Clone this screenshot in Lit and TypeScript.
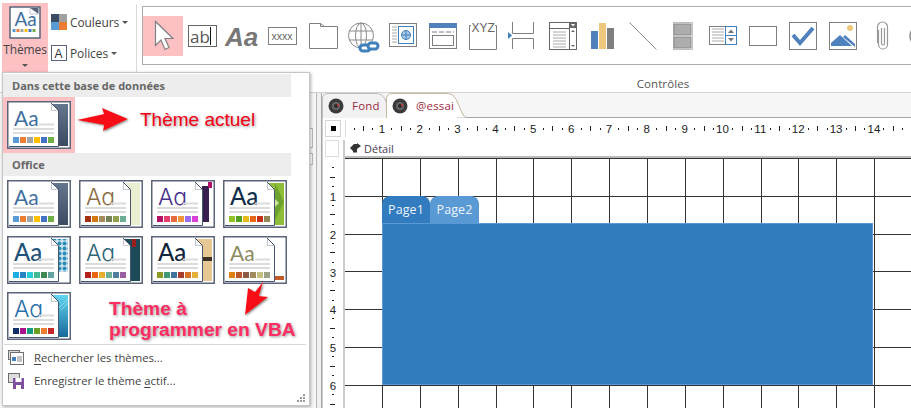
import { LitElement, html, css, svg } from "lit";
import { customElement } from "lit/decorators.js";

interface Theme { aa: string; w: number; size: number; single: boolean; sw: string[]; deco: unknown; }

const page = svg`
  <path d="M2 2H44L51 9V45H2Z" fill="#fff"/>
  <path d="M44 2L51.500 9.500V45.500H2" fill="none" stroke="#47566e"/>
  <path d="M44.500 3V9.500H51" fill="none" stroke="#c3c8d0"/>`;

const themes: Theme[] = [
  { aa: "#3f6f9f", w: 400, size: 21, single: false, sw: ["#5b9bd5", "#ed7d31", "#a5a5a5", "#ffc000", "#4472c4", "#70ad47"],
    deco: svg`<rect x="44" y="3" width="17" height="42" fill="url(#g1)"/>` },
  { aa: "#8a6c45", w: 300, size: 23, single: true, sw: ["#a5300f", "#d5770f", "#a58a5c", "#758258", "#8fa34c", "#6fae95"],
    deco: svg`<rect x="44" y="3" width="17" height="42" fill="#e9efd3"/>` },
  { aa: "#47308a", w: 300, size: 23, single: true, sw: ["#b31166", "#e33d6f", "#e46c3c", "#f09537", "#9a6cf0", "#d83ed8"],
    deco: svg`<rect x="51" y="6" width="7" height="36" fill="#37204f"/><rect x="57" y="2" width="4" height="6" fill="#b0106a"/>` },
  { aa: "#12304c", w: 500, size: 24, single: false, sw: ["#90c226", "#54a021", "#e6b91e", "#e76618", "#c42f1a", "#918655"],
    deco: svg`<rect x="44" y="3" width="17" height="42" fill="#8ebd3a"/><path d="M52 3L61 22L52 40Z" fill="#6ca32d"/><path d="M51 18L56 23L51 28Z" fill="#cfe3a3"/>` },
  { aa: "#1f5378", w: 500, size: 24, single: false, sw: ["#1cade4", "#2683c6", "#27ced7", "#42ba97", "#3e8853", "#62a39f"],
    deco: svg`<rect x="44" y="3" width="17" height="33" fill="url(#dots)"/>` },
  { aa: "#2f6678", w: 300, size: 23, single: true, sw: ["#b71e1e", "#e8640e", "#e6b02c", "#6fb094", "#4f7f9b", "#9b5fa0"],
    deco: svg`<rect x="44" y="3" width="17" height="42" fill="#1c4a58"/><rect x="53" y="3" width="4" height="8" fill="#9c1c1c"/>` },
  { aa: "#10263c", w: 500, size: 24, single: false, sw: ["#8c9a23", "#3f9a78", "#3f73a0", "#a63d30", "#d67628", "#e4b03a"],
    deco: svg`<rect x="44" y="3" width="17" height="42" fill="#e7c793"/><rect x="51" y="21" width="10" height="4" fill="#3b3124"/>` },
  { aa: "#8e8a60", w: 400, size: 21, single: false, sw: ["#e0800f", "#b9562a", "#8f5a45", "#a08a5c", "#c5bf82", "#9aa388"],
    deco: svg`<rect x="51" y="40" width="10" height="4" fill="#c35a2a"/><rect x="51" y="37" width="10" height="1" fill="#f3f3f3"/>` },
  { aa: "#2a6fa8", w: 300, size: 23, single: true, sw: ["#0f2f66", "#a8128c", "#149a7e", "#6da022", "#ed7d31", "#c42727"],
    deco: svg`<rect x="44" y="3" width="17" height="42" fill="url(#g9)"/><path d="M50 18L61 7M54 18L61 11" stroke="#a6e6f5" stroke-width=".7"/>` },
];

function thumb(t: Theme) {
  return svg`<svg class="thumb" width="64" height="48" viewBox="0 0 64 48">
    <defs>
      <linearGradient id="g1" x1="0" y1="0" x2="0" y2="1"><stop offset="0" stop-color="#66768e"/><stop offset="1" stop-color="#3a4a63"/></linearGradient>
      <linearGradient id="g9" x1="0" y1="0" x2="0" y2="1"><stop offset="0" stop-color="#62d6f0"/><stop offset="1" stop-color="#17699c"/></linearGradient>
      <pattern id="dots" width="5" height="5" patternUnits="userSpaceOnUse"><rect width="5" height="5" fill="#cbe4ef"/><circle cx="2.500" cy="2.500" r="2" fill="#2b8cb8"/></pattern>
    </defs>
    <rect x=".75" y=".75" width="62.500" height="46.500" fill="#fff" stroke="#5b6579" stroke-width="1.500"/>
    ${t.deco}
    ${page}
    <text class=${t.single ? "aa single" : "aa"} x="7" y="25" font-size=${t.size} font-weight=${t.w} fill=${t.aa}>Aa</text>
    <rect x="32" y="22.500" width="15" height="2" fill="#dcdcdc"/>
    <rect x="6" y="27" width="41" height="2" fill="#dcdcdc"/>
    <rect x="6" y="31" width="41" height="2" fill="#dcdcdc"/>
    ${t.sw.map((c, k) => svg`<rect x=${6 + k * 7} y="36" width="6" height="6" fill=${c}/>`)}
  </svg>`;
}

const P = "#7f7f7f";
const galleryIcons = [
  svg`<path d="M12.500 5.500V29.500L18 24L22 33.500L26 31.500L22 22.500H30Z" fill="#fff" stroke="#808080" stroke-width="1.200"/>`,
  svg`<rect x="5.500" y="9.500" width="28" height="21" fill="#fff" stroke="#666"/><text x="7" y="26.500" font-size="17" font-weight="500" fill="#555" class="os">ab</text><path d="M27.500 11V29" stroke="#111"/>`,
  svg`<text x="2" y="29.500" font-size="26" font-weight="700" font-style="italic" fill="#777" class="sans">Aa</text>`,
  svg`<rect x="5.500" y="11.500" width="28" height="17" fill="#fff" stroke=${P}/><text x="8.500" y="24" font-size="10.500" fill="#666" class="sans">xxxx</text>`,
  svg`<path d="M6.500 32.500V7.500H17.500L21.500 10.500H34.500V32.500Z M17.500 7.500V10.500H21.500" fill="#fff" stroke=${P}/>`,
  svg`<g fill="none" stroke="#8a8a8a"><circle cx="18" cy="19.500" r="12.500"/><ellipse cx="18" cy="19.500" rx="5.500" ry="12.500"/><path d="M18 7V32M6 15H30M6 24H30"/></g><g fill="none" stroke="#3f80bd" stroke-width="3"><rect x="17" y="29" width="10" height="6" rx="3" fill="#fff"/><rect x="25" y="27" width="10" height="6" rx="3" fill="#fff"/></g>`,
  svg`<rect x="6.500" y="7.500" width="27" height="23" fill="#fff" stroke=${P}/><path d="M9 11H14M9 14H14M9 17H14M9 20H14M9 23H14M9 26H14" stroke="#aaa"/><rect x="15.500" y="10.500" width="15" height="17" fill="none" stroke="#3f80bd"/><circle cx="23" cy="19" r="4.500" fill="#a9c8e6" stroke="#3f80bd"/><path d="M23 14.500V23.500M18.500 19H27.500" stroke="#3f80bd"/>`,
  svg`<rect x="6.500" y="7.500" width="27" height="25" fill="#fff" stroke=${P}/><rect x="6" y="7" width="28" height="5" fill="#4f81bd"/><path d="M9 16H31" stroke=${P} stroke-dasharray="5 2"/><rect x="9.500" y="19.500" width="21" height="10" fill="none" stroke=${P}/>`,
  svg`<path d="M8 9.500H6.500V33.500H33.500V9.500H32" fill="none" stroke=${P}/><text x="8.500" y="16" font-size="12" fill="#666" class="sans">XYZ</text>`,
  svg`<path d="M9.500 6V17.500H30.500V6M9.500 33V22.500H30.500V33" fill="none" stroke=${P}/><path d="M5 16L9 19.500L5 23Z" fill="#3f80bd"/>`,
  svg`<rect x="6.500" y="6.500" width="27" height="27" fill="#fff" stroke="#666"/><path d="M6.500 12.500H26.500M26.500 6.500V33.500" stroke="#666"/><rect x="26" y="6" width="8" height="6" fill="#666"/><path d="M28 8H32L30 10.500Z" fill="#fff"/><path d="M10 16H23M10 19H23M10 22H23M10 25H23M10 28H23M10 31H23" stroke="#aaa"/><path d="M28 16H32L30 14ZM28 29H32L30 31Z" fill="#666"/>`,
  svg`<rect x="8" y="15" width="7" height="18" fill="#4f81bd"/><rect x="16" y="7" width="7" height="26" fill="#edc77c"/><rect x="24" y="12" width="7" height="21" fill="#7f7f7f"/>`,
  svg`<path d="M6.500 6.500L33.500 33.500" stroke="#808080" stroke-width=".9"/>`,
  svg`<rect x="10.500" y="6.500" width="19" height="27" fill="#fff" stroke="#c0c0c0"/><rect x="11" y="8" width="17" height="11" fill="#adadad" stroke="#888"/><rect x="11" y="21" width="17" height="11" fill="#adadad" stroke="#888"/>`,
  svg`<rect x="6.500" y="10.500" width="27" height="18" fill="#fff" stroke=${P}/><path d="M9 13H21M9 16H21M9 19H21M9 22H21M9 25H21" stroke="#aaa"/><rect x="22.500" y="10.500" width="11" height="18" fill="#fff" stroke="#3f80bd"/><path d="M22.500 19.500H33.500" stroke="#3f80bd"/><path d="M25 17L28 13.500L31 17ZM25 22H31L28 25.500Z" fill="#777"/>`,
  svg`<rect x="6.500" y="10.500" width="27" height="19" fill="#fff" stroke=${P}/>`,
  svg`<rect x="6.500" y="6.500" width="27" height="27" fill="#fff" stroke=${P}/><path d="M10 19L17 27L30 12" fill="none" stroke="#4f81bd" stroke-width="4"/>`,
  svg`<rect x="6.500" y="6.500" width="27" height="27" fill="#fff" stroke=${P}/><circle cx="27" cy="12" r="3" fill="#edc77c"/><path d="M8 30V27L17 19L29 30Z" fill="#4f81bd"/><path d="M22 19L32 28V31L20 21Z" fill="#4f81bd"/>`,
  svg`<path d="M15.500 14V28.500A4.500 4.500 0 0 0 24.500 28.500V11A5 5 0 0 0 14.500 11V27M18.500 12V27.500A1.500 1.500 0 0 0 21.500 27.500V12" fill="none" stroke="#999" stroke-width="1.200"/>`,
  svg`<circle cx="17" cy="20" r="10" fill="none" stroke="#8a8a8a" stroke-width="1.500"/>`,
];

const gridX = Array.from({ length: 15 }, (_, k) => Math.round(37 + 37.85 * k));
const gridY = Array.from({ length: 7 }, (_, k) => Math.round(37.8 * k));
const RW = 567;

function hRuler() {
  const items = [];
  for (let k = 0; k < 15; k++) {
    const x0 = k * 37.85 - 2;
    if (k > 0) items.push(svg`<text x=${x0} y="12.500" text-anchor="middle">${k}</text>`);
    items.push(svg`<rect x=${Math.round(x0 + 9.500)} y="8" width="1" height="2" fill="#222"/>`);
    items.push(svg`<rect x=${Math.round(x0 + 19)} y="6" width="1" height="5" fill="#222"/>`);
    items.push(svg`<rect x=${Math.round(x0 + 28.400)} y="8" width="1" height="2" fill="#222"/>`);
  }
  return svg`<svg class="hr" width=${RW} height="17">${items}</svg>`;
}

function vRuler() {
  const items = [];
  for (let k = 0; k < 7; k++) {
    const y0 = k * 37.85 + 18;
    if (k > 0) items.push(svg`<text x="8" y=${y0 + 5} text-anchor="middle">${k}</text>`);
    items.push(svg`<rect x="7" y=${Math.round(y0 + 9)} width="2" height="1" fill="#222"/>`);
    items.push(svg`<rect x="5" y=${Math.round(y0 + 18.500)} width="5" height="1" fill="#222"/>`);
    items.push(svg`<rect x="7" y=${Math.round(y0 + 28)} width="2" height="1" fill="#222"/>`);
  }
  return svg`<svg class="vr" width="16" height="268">${items}</svg>`;
}

const disc = html`<svg class="disc" width="16" height="16" viewBox="0 0 16 16"><circle cx="8" cy="8" r="7.500" fill="#3a3a3a"/><circle cx="8" cy="8" r="4" fill="#666"/><circle cx="8" cy="8" r="2" fill="#2a2a2a"/><circle cx="10" cy="7" r="1" fill="#d33"/></svg>`;

@customElement("app-root")
export class AppRoot extends LitElement {
  static styles = css`
    :host { display: block; width: 911px; height: 408px; overflow: hidden; position: relative; background: #f6f6f6;
      font-family: "Open Sans", "Noto Sans", sans-serif; color: #444; }
    .sans { font-family: "Liberation Sans", Arial, sans-serif; }
    .os { font-family: "Open Sans", sans-serif; }
    .aa { font-family: "Lato", "Liberation Sans", sans-serif; }
    .aa.single { font-family: "Inter", "Lato", sans-serif; font-feature-settings: "cv11"; }
    .ribbon { height: 92px; background: #fff; border-bottom: 1px solid #d2d2d2; display: flex; }
    .tg { width: 136px; height: 69px; margin-top: 4px; border-right: 1px solid #dadada; display: flex; flex: none; }
    .themes { margin: -1px 0 0 2px; width: 46px; height: 69px; background: #fdc1c4; display: flex; flex-direction: column; align-items: center; flex: none; }
    .themes .thumb { width: 32px; height: 33px; margin-top: 3px; }
    .themes .lbl { font-size: 12px; line-height: 17px; margin-top: 2px; color: #444; letter-spacing: -.1px; }
    .caret { width: 0; height: 0; border: 3px solid transparent; border-top: 3px solid #555; border-bottom: 0; }
    .themes .caret { margin-top: 6px; border-width: 3px 3px 0; }
    .side { display: flex; flex-direction: column; gap: 15px; margin: 10px 0 0 3px; }
    .side-row { display: flex; align-items: center; gap: 3px; font-size: 12px; color: #444; height: 16px; letter-spacing: -.1px; }
    .gw { display: flex; flex-direction: column; flex: none; width: 1042px; margin-left: 5px; align-items: center; }
    .gallery { align-self: stretch; margin-top: 6px; height: 59px; box-sizing: border-box; border: 1px solid #adadad; border-right: 0;
      display: flex; align-items: center; overflow: hidden; background: #fff; }
    .gi { flex: none; width: 40px; height: 40px; }
    .gi.on { background: #fdc1c4; }
    .gi svg { display: block; }
    .glabel { font-size: 11.500px; color: #555; margin-top: 11px; line-height: 16px; letter-spacing: .1px; }
    .body { display: flex; height: 315px; }
    .left { width: 322px; flex: none; border-right: 1px solid #a8a8a8; box-sizing: border-box; display: flex; justify-content: space-between; padding-left: 309px; }
    .stubs { display: flex; flex-direction: column; gap: 5px; padding-top: 35px; width: 4px; }
    .stubs b { display: block; height: 18px; border: 1px solid #bbb; border-left: 0; background: #fff; }
    .stubs b + b { height: 10px; }
    .left i { display: block; width: 4px; border-left: 1px solid #b5b5b5; background: #f0f0f0; }
    .main { flex: 1; display: flex; flex-direction: column; min-width: 0; }
    .tabs { height: 25px; display: flex; border-bottom: 1px solid #a8a8a8; box-sizing: border-box; flex: none; }
    .tab { position: relative; height: 25px; display: flex; align-items: center; font-size: 11.500px; color: #9c2a3f; letter-spacing: .2px; flex: none; }
    .tab .shape { position: absolute; left: 0; top: 0; }
    .tab .disc { position: relative; margin-left: 6px; }
    .tab span { position: relative; }
    .tab.t1 { width: 64px; }
    .tab.t1 span { margin-left: 8px; }
    .tab.t2 { width: 80px; }
    .tab.t2 span { margin-left: 8px; }
    .surface { flex: 1; background: #fff; display: grid; grid-template-columns: 22px 1fr; grid-template-rows: 22px auto; overflow: hidden; border-left: 1px solid #ccc; }
    .corner { width: 14px; height: 15px; margin: 2px 0 0 2px; border: 1px solid #d4d4d4; display: flex; align-items: center; justify-content: center; }
    .corner b { display: block; width: 5px; height: 5px; background: #000; }
    .hr { margin-top: 2px; border-left: 1px solid #ddd; display: block; }
    .hr text, .vr text { font-family: "Liberation Sans", sans-serif; font-size: 11.500px; fill: #222; }
    .vcol { border-right: 2px solid #ccc; padding-left: 2px; box-sizing: border-box; width: 22px; }
    .vcell { width: 14px; height: 17px; border: 1px solid #ddd; box-sizing: border-box; }
    .vr { display: block; margin-top: -17px; }
    .canvas { display: flex; flex-direction: column; }
    .band { height: 18px; display: flex; align-items: center; gap: 3px; padding-left: 5px; font-size: 11px; color: #4b3b57; border-bottom: 2px solid #bbb; box-sizing: border-box; }
    .gridbox { position: relative; flex: 1; }
    .gridbox > svg { display: block; }
    .tabctl { position: absolute; left: 37px; top: 38px; width: 491px; display: flex; flex-direction: column; }
    .tc-tabs { display: flex; height: 27px; }
    .tc-tab { width: 48px; height: 27px; border-radius: 8px 8px 0 0; color: #eef4fb; font-size: 12.500px; display: flex; align-items: center; justify-content: center; letter-spacing: .1px; }
    .tc-tab.a { background: #327bbf; }
    .tc-tab.b { background: #5a9ad4; width: 49px; }
    .tc-body { height: 162px; background: #327bbf; border: 1px solid #5a9ad4; box-sizing: border-box; }
    .menu { position: absolute; left: 2px; top: 72px; width: 308px; height: 334px; background: #fff; box-sizing: border-box; border: 1px solid #c6c6c6; box-shadow: 1px 1px 3px rgba(0,0,0,.3); padding: 1px 18px 0 0; display: flex; flex-direction: column; }
    .mh { height: 23px; background: #ededed; font-size: 11px; font-weight: 700; color: #666; display: flex; align-items: center; padding-left: 9px; flex: none; }
    .cur { width: 72px; height: 56px; background: #fdc1c4; display: flex; align-items: center; justify-content: center; flex: none; }
    .grid { display: grid; grid-template-columns: repeat(4, 64px); grid-auto-rows: 48px; gap: 8px; padding: 4px 4px 0; flex: none; width: 288px; box-sizing: border-box; }
    .thumb { display: block; }
    .mi-wrap { border-top: 1px solid #d8d8d8; margin: 4px -15px 0 1px; padding: 1px 0 0 3px; display: flex; flex-direction: column; }
    .mi { height: 23px; display: flex; align-items: center; gap: 9px; font-size: 11.300px; color: #444; }
    .mi svg { flex: none; }
    .mi u { text-underline-offset: 2px; }
    .grip { position: absolute; right: 4px; bottom: 3px; }
    .note { position: absolute; font-family: "Liberation Sans", Arial, sans-serif; white-space: nowrap; }
    .n1 { left: 137px; top: 36px; color: #f40014; font-size: 19px; line-height: 22px; text-shadow: 1px 1px 3px rgba(90,90,90,.65), 0 0 2px #fff; }
    .n2 { left: 106px; top: 225px; color: #fb2d62; font-size: 19.200px; line-height: 21px; font-weight: 700; text-shadow: 1px 1px 3px rgba(90,90,90,.65); }
    .arrows { position: absolute; left: 0; top: 0; pointer-events: none; }
  `;

  render() {
    return html`
      <div class="ribbon">
        <div class="tg">
          <div class="themes">
            <svg class="thumb" width="32" height="33" viewBox="0 0 32 33">
              <rect x="1" y="1" width="30" height="31" fill="#fff" stroke="#59647a" stroke-width="1.500"/>
              <path d="M21 2.500V8H29" fill="none" stroke="#c3c8d0"/>
              <path d="M21 2L29.500 8V2Z" fill="#59647a"/>
              <text class="aa" x="5.500" y="20" font-size="19" font-weight="400" fill="#3f6f9f">Aa</text>
              ${["#5b9bd5", "#ed7d31", "#a5a5a5", "#ffc000", "#4472c4", "#70ad47"].map((c, k) => svg`<rect x=${3.500 + k * 4} y="23" width="3" height="3" fill=${c}/>`)}
            </svg>
            <div class="lbl">Thèmes</div>
            <div class="caret"></div>
          </div>
          <div class="side">
            <div class="side-row">
              <svg width="16" height="16"><rect width="8" height="8" fill="#3b4b61"/><rect x="8" width="8" height="8" fill="#a0a0a0"/><rect y="8" width="8" height="8" fill="#5b9bd5"/><rect x="8" y="8" width="8" height="8" fill="#ed7d31"/></svg>
              <span>Couleurs</span><div class="caret"></div>
            </div>
            <div class="side-row">
              <svg width="16" height="16"><rect x=".5" y=".5" width="15" height="15" fill="#fff" stroke="#59647a"/><text x="3.500" y="13" font-size="12" fill="#333" class="sans">A</text></svg>
              <span>Polices</span><div class="caret"></div>
            </div>
          </div>
        </div>
        <div class="gw">
          <div class="gallery">
            ${galleryIcons.map((g, i) => html`<div class=${i === 0 ? "gi on" : "gi"}><svg width="40" height="40" viewBox="0 0 40 40">${g}</svg></div>`)}
          </div>
          <div class="glabel">Contrôles</div>
        </div>
      </div>
      <div class="body">
        <div class="left"><div class="stubs"><b></b><b></b></div><i></i></div>
        <div class="main">
          <div class="tabs">
            <div class="tab t1">
              <svg class="shape" width="66" height="25"><path d="M.5 25V6Q.5 .5 6 .5H54Q60 .5 63 6L65 12V25" fill="#f2f2f2" stroke="#bdbdbd"/></svg>
              ${disc}<span>Fond</span>
            </div>
            <div class="tab t2">
              <svg class="shape" width="82" height="26"><path d="M.5 25V6Q.5 .5 6 .5H62Q67 .5 70 6L77 22L80 24.500" fill="#fff" stroke="#c4b79d"/><rect x="1" y="20" width="70" height="5" fill="#fff"/></svg>
              ${disc}<span>@essai</span>
            </div>
          </div>
          <div class="surface">
            <div class="corner"><b></b></div>
            ${hRuler()}
            <div class="vcol">
              <div class="vcell"></div>
              ${vRuler()}
            </div>
            <div class="canvas">
              <div class="band">
                <svg width="11" height="10" viewBox="0 0 11 10"><path d="M0 5L4 1H7V0L11 3L7 6V9.500H3V8Z" fill="#333"/></svg>
                <span>Détail</span>
              </div>
              <div class="gridbox">
                <svg width=${RW} height="250" shape-rendering="crispEdges">
                  <path d=${gridX.map((x) => `M${x + .5} 0V250`).join("")} stroke="#333"/>
                  <path d=${gridY.map((y) => `M0 ${y + .5}H${RW}`).join("")} stroke="#333"/>
                </svg>
                <div class="tabctl">
                  <div class="tc-tabs"><div class="tc-tab a">Page1</div><div class="tc-tab b">Page2</div></div>
                  <div class="tc-body"></div>
                </div>
              </div>
            </div>
          </div>
        </div>
      </div>
      <div class="menu">
        <div class="mh">Dans cette base de données</div>
        <div class="cur">${thumb(themes[0])}</div>
        <div class="mh">Office</div>
        <div class="grid">${themes.map((t) => thumb(t))}</div>
        <div class="mi-wrap">
          <div class="mi">
            <svg width="18" height="18" viewBox="0 0 18 18"><rect x="1.500" y="1.500" width="11" height="9" fill="#ddd" stroke="#6e6e6e"/><rect x="3.500" y="3.500" width="13" height="12" fill="#fff" stroke="#6e6e6e"/><rect x="5" y="8" width="4" height="4" fill="#3f80bd"/><path d="M10 8H15M10 10H15M10 12H15" stroke="#888"/></svg>
            <span><u>R</u>echercher les thèmes...</span>
          </div>
          <div class="mi">
            <svg width="18" height="18" viewBox="0 0 18 18"><rect x="1.500" y="1.500" width="11" height="9" fill="#ddd" stroke="#6e6e6e"/><rect x="6" y="6" width="11" height="11" fill="#7e4f9e"/><rect x="8.500" y="6" width="6" height="4" fill="#fff"/><rect x="9" y="13" width="5" height="4" fill="#fff"/></svg>
            <span>Enregistrer le thème <u>a</u>ctif...</span>
          </div>
        </div>
        <svg class="grip" width="8" height="8"><path d="M6 0h2v2H6zM3 3h2v2H3zM6 3h2v2H6zM0 6h2v2H0zM3 6h2v2H3zM6 6h2v2H6z" fill="#9a9a9a"/></svg>
        <div class="note n1">Thème actuel</div>
        <div class="note n2">Thème à<br />programmer en VBA</div>
      </div>
      <svg class="arrows" width="911" height="408">
        <defs><filter id="sh" x="-20%" y="-20%" width="140%" height="140%"><feDropShadow dx="1" dy="1" stdDeviation="1.200" flood-color="#888"/></filter></defs>
        <polygon points="77,120 104,114 102,108 128,119 103,131 104,125" fill="#f70d14" filter="url(#sh)"/>
        <polygon points="245,315 248,288 255,292 263,282 259,296 268,297" fill="#f70d14" filter="url(#sh)"/>
      </svg>
    `;
  }
}
